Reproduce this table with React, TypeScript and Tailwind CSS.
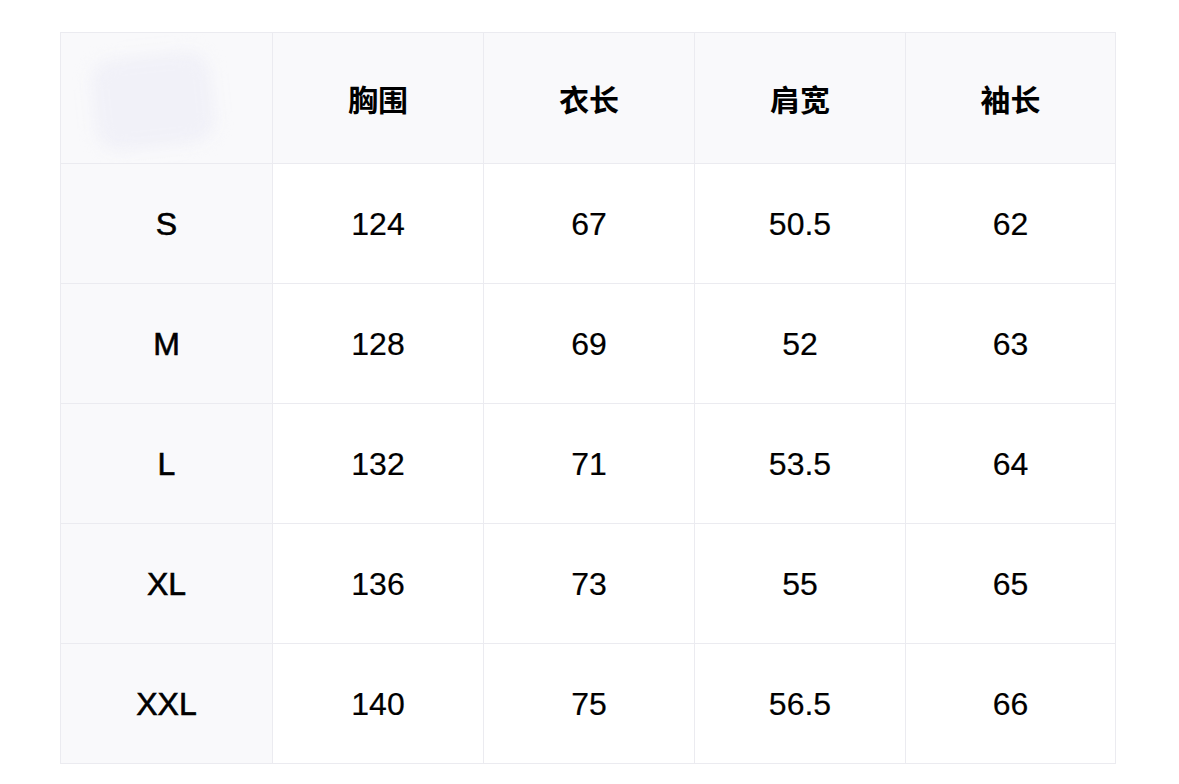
const headers = ['胸围', '衣长', '肩宽', '袖长'];

const rows = [
  { size: 'S', values: ['124', '67', '50.5', '62'] },
  { size: 'M', values: ['128', '69', '52', '63'] },
  { size: 'L', values: ['132', '71', '53.5', '64'] },
  { size: 'XL', values: ['136', '73', '55', '65'] },
  { size: 'XXL', values: ['140', '75', '56.5', '66'] },
];

export default function App() {
  return (
    <div className="min-h-[784px] w-[1179px] bg-white pl-[60px] pt-[32px] font-['Liberation_Sans','Noto_Sans_CJK_SC',sans-serif] text-black">
      <table className="w-[1055px] table-fixed border-collapse border border-[#ebebf0]">
        <colgroup>
          <col className="w-[212px]" />
          <col className="w-[211px]" />
          <col className="w-[211px]" />
          <col className="w-[211px]" />
          <col className="w-[210px]" />
        </colgroup>
        <thead>
          <tr className="h-[131px] bg-[#f9f9fb]">
            <th className="border border-[#ebebf0] p-0">
              <div className="relative h-[130px] overflow-hidden">
                <div className="absolute left-[32px] top-[22px] h-[92px] w-[120px] -rotate-6 rounded-[24px] bg-[#f1f1f8] blur-[8px]" />
              </div>
            </th>
            {headers.map((h) => (
              <th
                key={h}
                className="border border-[#ebebf0] p-0 text-center font-['Noto_Sans_CJK_SC',sans-serif] text-[30px] font-bold"
              >
                {h}
              </th>
            ))}
          </tr>
        </thead>
        <tbody>
          {rows.map((r) => (
            <tr key={r.size} className="h-[120px]">
              <td className="border border-[#ebebf0] bg-[#f9f9fb] p-0 text-center text-[32px] [-webkit-text-stroke:0.6px_black]">
                {r.size}
              </td>
              {r.values.map((v, i) => (
                <td
                  key={i}
                  className="border border-[#ebebf0] p-0 text-center text-[32px] [-webkit-text-stroke:0.2px_black]"
                >
                  {v}
                </td>
              ))}
            </tr>
          ))}
        </tbody>
      </table>
    </div>
  );
}
